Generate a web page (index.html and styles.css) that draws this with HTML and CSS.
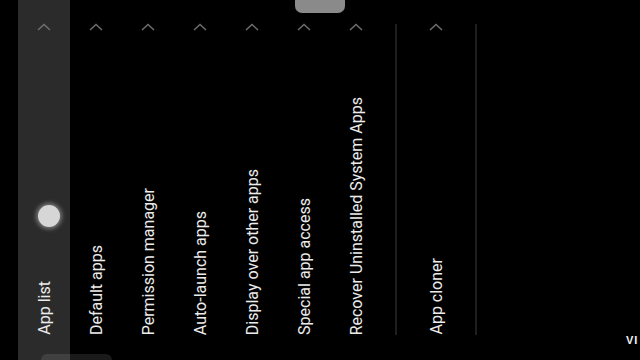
FILE: index.html
```html
<!DOCTYPE html>
<html>
<head>
<meta charset="utf-8">
<link rel="stylesheet" href="styles.css">
</head>
<body>
<div class="screen">
  <div class="group">
    <div class="col active">
      <svg class="chev" width="14" height="8" viewBox="0 0 14 8"><polyline points="1,7 7,1.5 13,7"/></svg>
      <span class="label">App list</span>
      <span class="touch"></span>
    </div>
    <div class="col">
      <svg class="chev" width="14" height="8" viewBox="0 0 14 8"><polyline points="1,7 7,1.5 13,7"/></svg>
      <span class="label">Default apps</span>
    </div>
    <div class="col">
      <svg class="chev" width="14" height="8" viewBox="0 0 14 8"><polyline points="1,7 7,1.5 13,7"/></svg>
      <span class="label">Permission manager</span>
    </div>
    <div class="col">
      <svg class="chev" width="14" height="8" viewBox="0 0 14 8"><polyline points="1,7 7,1.5 13,7"/></svg>
      <span class="label">Auto-launch apps</span>
    </div>
    <div class="col">
      <svg class="chev" width="14" height="8" viewBox="0 0 14 8"><polyline points="1,7 7,1.5 13,7"/></svg>
      <span class="label">Display over other apps</span>
    </div>
    <div class="col">
      <svg class="chev" width="14" height="8" viewBox="0 0 14 8"><polyline points="1,7 7,1.5 13,7"/></svg>
      <span class="label">Special app access</span>
    </div>
    <div class="col">
      <svg class="chev" width="14" height="8" viewBox="0 0 14 8"><polyline points="1,7 7,1.5 13,7"/></svg>
      <span class="label">Recover Uninstalled System Apps</span>
    </div>
  </div>
  <div class="divider first"></div>
  <div class="group">
    <div class="col wide">
      <svg class="chev" width="14" height="8" viewBox="0 0 14 8"><polyline points="1,7 7,1.5 13,7"/></svg>
      <span class="label">App cloner</span>
    </div>
  </div>
  <div class="divider"></div>
</div>
<div class="handle"></div>
<div class="navbar"></div>
<div class="mark">VI</div>
</body>
</html>
```
FILE: styles.css
```css
html, body {
  margin: 0;
  padding: 0;
  background: #000;
  width: 640px;
  height: 360px;
  overflow: hidden;
  font-family: Roboto, "Liberation Sans", sans-serif;
}
.screen {
  display: flex;
  height: 360px;
  padding-left: 18px;
  box-sizing: border-box;
}
.group {
  display: flex;
}
.col {
  position: relative;
  width: 52px;
  display: flex;
  flex-direction: column;
  align-items: center;
  padding: 23px 0 25px;
  box-sizing: border-box;
}
.col.wide {
  width: 78px;
}
.col.active {
  background: #2b2b2b;
}
.chev {
  display: block;
  fill: none;
  stroke: #707070;
  stroke-width: 1.4;
}
.label {
  margin-top: auto;
  writing-mode: vertical-rl;
  transform: rotate(180deg);
  white-space: nowrap;
  font-size: 16px;
  line-height: 19px;
  color: #ececec;
}
.touch {
  position: absolute;
  left: 20px;
  top: 205px;
  width: 22px;
  height: 22px;
  border-radius: 50%;
  background: #d6d6d6;
  box-shadow: 0 0 4px 2px rgba(220, 220, 220, 0.45);
}
.divider {
  width: 2px;
  background: #1e1e1e;
  margin: 24px 0 25px;
}
.divider.first {
  margin-left: 13px;
}
.handle {
  position: absolute;
  left: 295px;
  top: 0;
  width: 50px;
  height: 13px;
  background: #8a8a8a;
  border-radius: 0 0 7px 7px;
}
.navbar {
  position: absolute;
  left: 41px;
  top: 354px;
  width: 71px;
  height: 12px;
  background: rgba(255, 255, 255, 0.1);
  border-radius: 6px;
}
.mark {
  position: absolute;
  left: 626px;
  top: 334px;
  font-size: 11px;
  font-weight: bold;
  letter-spacing: 1px;
  color: #f2f2f2;
  font-family: "Liberation Sans", sans-serif;
}
```
